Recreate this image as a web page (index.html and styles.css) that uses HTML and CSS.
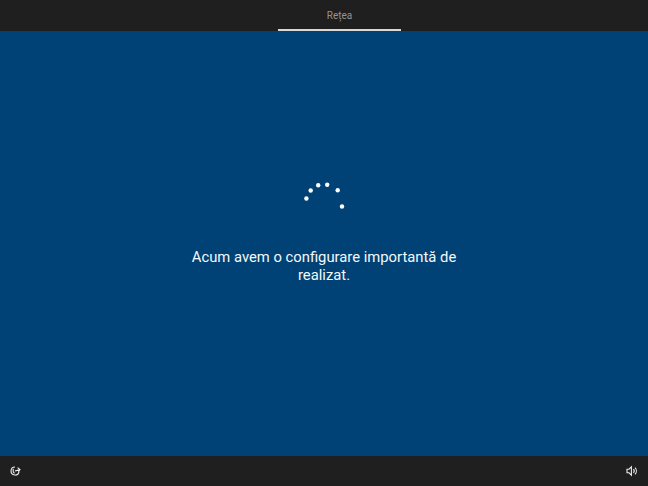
FILE: index.html
```html
<!DOCTYPE html>
<html lang="ro">
<head>
<meta charset="UTF-8" />
<title>Rețea</title>
<link rel="stylesheet" href="styles.css">
</head>
<body>

<div class="top-bar">
    <div class="tab">Rețea</div>
</div>

<div class="main">
    <svg class="spinner" viewBox="0 0 60 40" width="60" height="40">
        <circle cx="16.4" cy="18.5" r="2.2"/>
        <circle cx="20.7" cy="10.5" r="2.2"/>
        <circle cx="28.2" cy="5.2" r="2.2"/>
        <circle cx="37.2" cy="4.7" r="2.2"/>
        <circle cx="47.7" cy="10.3" r="2.2"/>
        <circle cx="52" cy="26.5" r="2.2"/>
    </svg>
    <p class="message">Acum avem o configurare importantă de realizat.</p>
</div>

<div class="bottom-bar">
    <svg class="icon" viewBox="0 0 12 12" width="12" height="12">
        <path d="M6 2A4 4 0 1 0 10 6.6"/>
        <path d="M4.2 3.8V6.4A1.6 1.6 0 0 0 5.8 8"/>
        <path d="M6 6L11 4.6M8.6 2.6L11 4.6L9.4 6.8"/>
    </svg>
    <svg class="icon" viewBox="0 0 12 12" width="12" height="12">
        <path d="M1 4.2H3L5.4 1.8V10.2L3 7.8H1Z"/>
        <path d="M7.4 4.2A2.6 2.6 0 0 1 7.4 7.8M9 2.6A5 5 0 0 1 9 9.4"/>
    </svg>
</div>

</body>
</html>
```

FILE: styles.css
```css
body {
    margin: 0;
    width: 648px;
    height: 486px;
    display: flex;
    flex-direction: column;
    background: #004275;
    font-family: "Roboto", "Liberation Sans", sans-serif;
    overflow: hidden;
}

.top-bar {
    height: 31px;
    padding-left: 31px;
    background: #1f1f1f;
    display: flex;
    justify-content: center;
}

.tab {
    width: 123px;
    height: 29px;
    line-height: 32px;
    text-align: center;
    font-size: 10px;
    color: #949494;
    border-bottom: 2px solid #d8d8d8;
}

.main {
    flex: 1;
    display: flex;
    flex-direction: column;
    align-items: center;
    padding-top: 149px;
}

.spinner {
    fill: #fff;
    margin-left: -9px;
}

.message {
    width: 280px;
    margin: 28px 0 0;
    font-size: 14.8px;
    line-height: 18px;
    text-align: center;
    color: #f5f8fa;
}

.bottom-bar {
    height: 30px;
    background: #1f1f1f;
    display: flex;
    justify-content: space-between;
    align-items: center;
    padding: 0 10px 0 9px;
}

.icon {
    fill: none;
    stroke: #eeeeee;
    stroke-width: 1.1;
}
```
